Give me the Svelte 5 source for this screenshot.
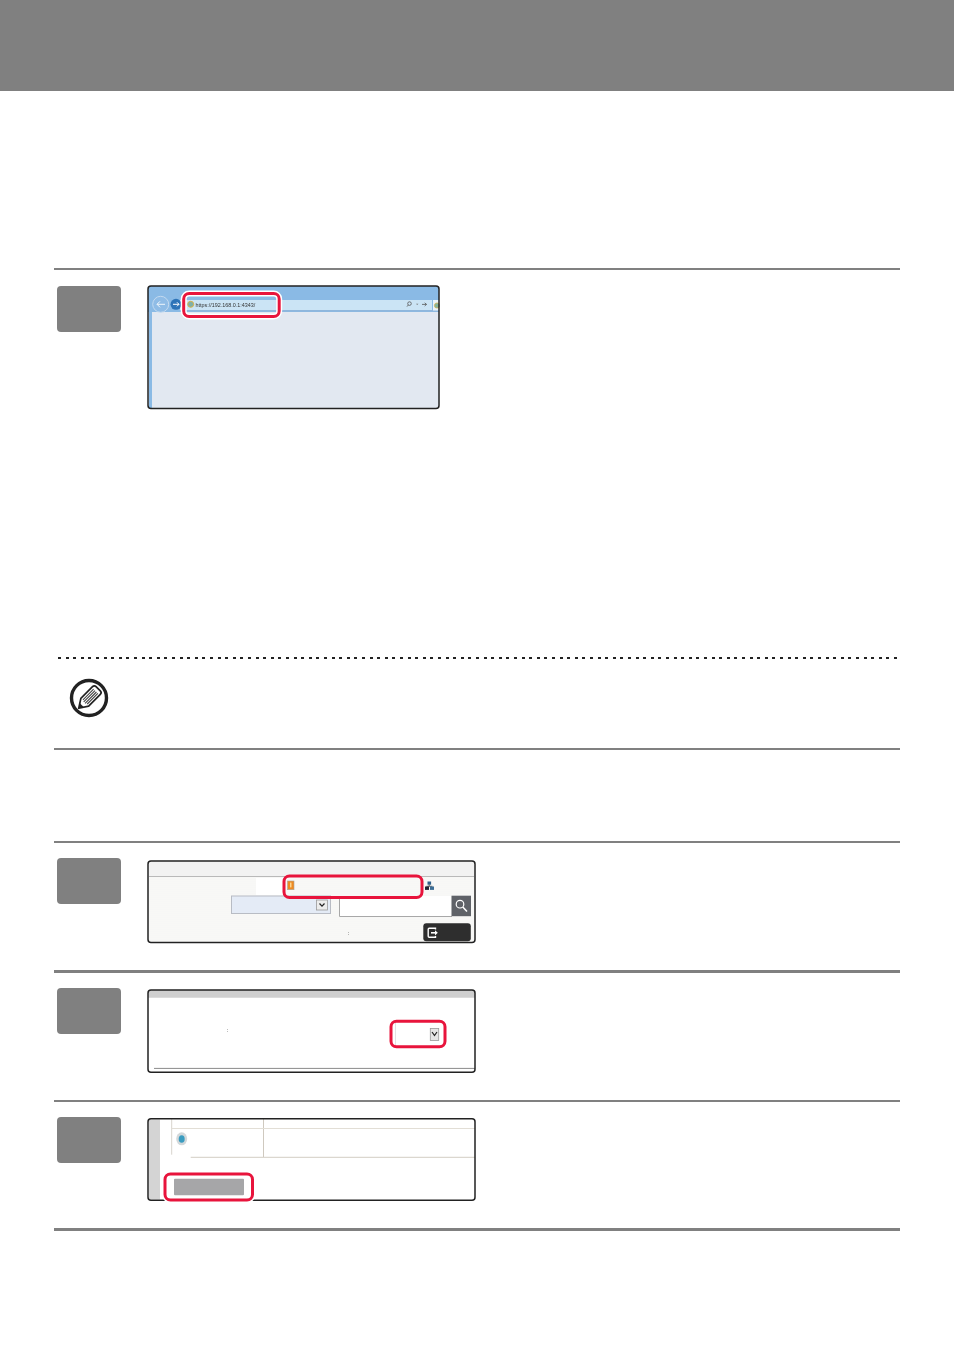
<script>
  // stripes on the grey-white panels in the second screenshot
  const stripes = Array.from({ length: 32 }, (_, i) => 878 + i * 2);
</script>

<div class="page">
  <header class="banner"></header>

  <main class="content">
    <section class="step first">
      <div class="badge"></div>
      <svg class="shot" width="294" height="125" viewBox="147 285 294 125">
        <rect x="148" y="286" width="291" height="122.5" rx="3" fill="#e2e8f1" />
        <path d="M151 286h285a3 3 0 0 1 3 3v23H148v-23a3 3 0 0 1 3-3z" fill="#8abae5" />
        <rect x="149" y="312" width="3" height="96" fill="#8abae5" />
        <rect x="180" y="300" width="252" height="10.5" fill="#cbe4f5" />
        <rect x="180" y="310" width="259" height="1.5" fill="#8fb6dc" />
        <!-- back / forward -->
        <circle cx="160.7" cy="304.3" r="8" fill="#8fbce6" stroke="#c3daf0" stroke-width="1" />
        <path d="M165 304.3h-8m3-3-3 3 3 3" fill="none" stroke="#eef5fb" stroke-width="1" />
        <circle cx="176" cy="304.3" r="5.5" fill="#2d74b8" />
        <path d="M173 304.3h6m-2-2 2 2-2 2" fill="none" stroke="#fff" stroke-width="1" />
        <!-- address bar -->
        <circle cx="190.7" cy="304.3" r="3" fill="#7fb0a8" stroke="#d8b24a" stroke-width="1" />
        <text x="195.5" y="306.6" class="url">https://192.168.0.1:4343/</text>
        <circle cx="409.5" cy="303.6" r="1.8" fill="none" stroke="#555" stroke-width=".8" />
        <path d="M408.3 305l-1.3 1.6" stroke="#555" stroke-width=".8" />
        <path d="M416 303.8h2.4l-1.2 1.3z" fill="#777" />
        <path d="M422 304.4h4.5m-1.8-1.6 1.8 1.6-1.8 1.6" fill="none" stroke="#555" stroke-width=".8" />
        <!-- tab -->
        <rect x="433" y="300" width="6" height="10.5" fill="#eaf3fa" />
        <circle cx="437" cy="305.5" r="2.6" fill="#86b39a" stroke="#d8b24a" stroke-width=".7" />
        <rect x="148" y="286" width="291" height="122.5" rx="3" class="frame" />
        <rect x="183.7" y="293.5" width="95.5" height="23" rx="5.5" class="halo" />
        <rect x="183.7" y="293.5" width="95.5" height="23" rx="5.5" class="mark" />
      </svg>
    </section>

    <div class="dots"></div>

    <section class="note">
      <svg width="40" height="40" viewBox="0 0 40 40">
        <circle cx="20" cy="20" r="17.5" fill="#fff" stroke="#222" stroke-width="3.4" />
        <g transform="rotate(45 20 20)">
          <path d="M14.5 9.5a2.5 2.5 0 0 1 2.5-2.5h6a2.5 2.5 0 0 1 2.5 2.5V26L20 34.5 14.5 26z" fill="#fff" stroke="#222" stroke-width="1.7" stroke-linejoin="round" />
          <path d="M17 10.5v15M19 10.5v16M21 10.5v16M23 10.5v15" stroke="#444" stroke-width="1.1" />
          <path d="M17.3 30.2 20 34.5l2.7-4.3z" fill="#222" />
        </g>
      </svg>
    </section>

    <div class="spacer"></div>

    <section class="step second">
      <div class="badge"></div>
      <svg class="shot" width="331" height="85" viewBox="147 859 331 85">
        <rect x="148" y="861" width="327" height="81.5" rx="3" fill="#fafaf9" />
        {#each stripes as y}
          <line x1="149" x2="474" y1={y} y2={y} stroke="#f5f5f3" stroke-width="1" />
        {/each}
        <rect x="149" y="861.5" width="325" height="14.5" fill="#f2f2f2" />
        <line x1="149" x2="474" y1="876.5" y2="876.5" stroke="#b9b9b9" stroke-width="1" />
        <rect x="256" y="878" width="28" height="17" fill="#fff" />
        <rect x="287.5" y="881" width="6.5" height="8.7" fill="#ee8a22" stroke="#a9a39a" stroke-width=".6" />
        <rect x="290.2" y="882.6" width="1.2" height="4.8" fill="#ffe6a8" />
        <!-- network icon -->
        <rect x="427.5" y="881.5" width="3.6" height="3.2" fill="#2e5f8a" />
        <path d="M429.2 884.5v1.6M426.4 886.3h6" stroke="#333" stroke-width=".8" fill="none" />
        <rect x="425" y="886.5" width="4" height="3.4" fill="#223" />
        <rect x="430" y="886.5" width="4" height="3.4" fill="#3c6d96" />
        <!-- dropdown -->
        <rect x="231.5" y="896" width="99" height="17.5" fill="#e4ebf6" stroke="#b8bcc4" stroke-width="1" />
        <rect x="316.5" y="900" width="11" height="10" fill="#ececec" stroke="#9a9a9a" stroke-width=".8" />
        <path d="M319.5 903.5l2.5 2.7 2.5-2.7" fill="none" stroke="#222" stroke-width="1.2" />
        <!-- search -->
        <rect x="339.5" y="896" width="112" height="20.5" fill="#fff" />
        <path d="M339.5 896v20.5H452" fill="none" stroke="#a8a8a8" stroke-width="1" />
        <rect x="451.5" y="895.7" width="19.5" height="20.5" fill="#5f6268" />
        <circle cx="460" cy="904.2" r="3.8" fill="none" stroke="#fff" stroke-width="1.2" />
        <path d="M462.8 907l4.2 4.4" stroke="#fff" stroke-width="1.5" />
        <text x="347.6" y="935" class="colon">:</text>
        <!-- logout -->
        <rect x="423.3" y="923.3" width="47.5" height="18" rx="3" fill="#2e2e2e" />
        <path d="M435.5 929.5v-1.2h-6.3a1 1 0 0 0-1 1v7a1 1 0 0 0 1 1h6.3v-1.2" fill="none" stroke="#fff" stroke-width="1.4" />
        <path d="M431 932.8h5" stroke="#fff" stroke-width="1.6" />
        <path d="M435 930.2l2.8 2.6-2.8 2.6z" fill="#fff" />
        <rect x="148" y="861" width="327" height="81.5" rx="3" class="frame" />
        <rect x="284" y="876" width="138" height="21.5" rx="5.5" class="mark" />
      </svg>
    </section>

    <section class="step third">
      <div class="badge"></div>
      <svg class="shot" width="331" height="86" viewBox="147 988 331 86">
        <rect x="148" y="990" width="327" height="82.3" rx="3" fill="#fff" />
        <path d="M151 990h321a3 3 0 0 1 3 3v4.7H148V993a3 3 0 0 1 3-3z" fill="#cfcfcf" />
        <text x="226.6" y="1032" class="colon">:</text>
        <line x1="154" x2="475" y1="1068.4" y2="1068.4" stroke="#8a8a8a" stroke-width="1" />
        <line x1="395.5" x2="395.5" y1="1023" y2="1045" stroke="#e2e2e2" stroke-width="1" />
        <rect x="430.3" y="1028.5" width="8.4" height="12" fill="#e6e6e6" stroke="#9a9a9a" stroke-width=".8" />
        <path d="M432 1032l2.5 3.5 2.5-3.5" fill="none" stroke="#222" stroke-width="1.2" />
        <rect x="148" y="990" width="327" height="82.3" rx="3" class="frame" />
        <rect x="391" y="1021.3" width="54" height="25.5" rx="5.5" class="mark" />
      </svg>
    </section>

    <section class="step fourth">
      <div class="badge"></div>
      <svg class="shot" width="331" height="84" viewBox="147 1118 331 84">
        <rect x="148" y="1118.7" width="327" height="81.6" rx="3" fill="#fff" />
        <rect x="149" y="1119.5" width="11" height="80" fill="#d4d4d4" />
        <line x1="171.7" x2="171.7" y1="1119" y2="1154.7" stroke="#d8d4cd" stroke-width="1" />
        <line x1="263.5" x2="263.5" y1="1119" y2="1157" stroke="#cfc9bf" stroke-width="1" />
        <line x1="172" x2="475" y1="1128.5" y2="1128.5" stroke="#e2ded6" stroke-width="1" />
        <line x1="190.7" x2="475" y1="1157.3" y2="1157.3" stroke="#d2cdc4" stroke-width="1" />
        <ellipse cx="181.7" cy="1138.8" rx="5.5" ry="6.5" fill="#d3d8da" />
        <ellipse cx="181.7" cy="1139" rx="3" ry="3.8" fill="#3a9cc0" />
        <rect x="174" y="1178.7" width="70" height="16.6" rx="1" fill="#a6a6a8" />
        <rect x="148" y="1118.7" width="327" height="81.6" rx="3" class="frame" />
        <rect x="165" y="1174" width="87.5" height="26" rx="5.5" class="halo" />
        <rect x="165" y="1174" width="87.5" height="26" rx="5.5" class="mark" />
      </svg>
    </section>
  </main>
</div>

<style>
  :global(body) {
    margin: 0;
    background: #fff;
  }
  .page {
    width: 954px;
    height: 1350px;
    font-family: "Liberation Sans", Arial, sans-serif;
  }
  .banner {
    height: 91px;
    background: #808080;
  }
  .content {
    padding: 177px 54px 0;
  }
  .step {
    display: flex;
    gap: 26px;
    padding-left: 3px;
    box-sizing: border-box;
    border-top: 2px solid #808080;
  }
  .badge {
    flex: none;
    width: 64px;
    height: 46px;
    border-radius: 4px;
    background: #808080;
  }
  .shot {
    display: block;
    flex: none;
    overflow: visible;
    filter: blur(0.3px);
  }
  .first {
    height: 389px;
    padding-top: 16px;
  }
  .first .shot {
    margin-top: -1px;
  }
  .dots {
    height: 2px;
    margin: 0 3px 0 4px;
    background: repeating-linear-gradient(90deg, #222 0 3px, transparent 3px 7.6px);
  }
  .note {
    height: 89px;
    padding: 19px 0 0 15px;
    box-sizing: border-box;
  }
  .note svg {
    display: block;
  }
  .spacer {
    height: 93px;
    border-top: 2px solid #808080;
    box-sizing: border-box;
  }
  .second {
    height: 129px;
    padding-top: 16px;
  }
  .second .badge,
  .fourth .badge {
    margin-top: -1px;
  }
  .third {
    height: 130px;
    padding-top: 15px;
    border-top-width: 3px;
  }
  .fourth {
    height: 131px;
    padding-top: 16px;
    border-bottom: 3px solid #808080;
  }
  .frame {
    fill: none;
    stroke: #222;
    stroke-width: 1.5;
  }
  .mark {
    fill: none;
    stroke: #e8143c;
    stroke-width: 3;
  }
  .halo {
    fill: none;
    stroke: #fff;
    stroke-width: 6;
  }
  .url {
    font-family: "Liberation Sans", Arial, sans-serif;
    font-size: 5.4px;
    fill: #333;
  }
  .colon {
    font-family: "Liberation Sans", Arial, sans-serif;
    font-size: 6px;
    fill: #222;
  }
</style>
